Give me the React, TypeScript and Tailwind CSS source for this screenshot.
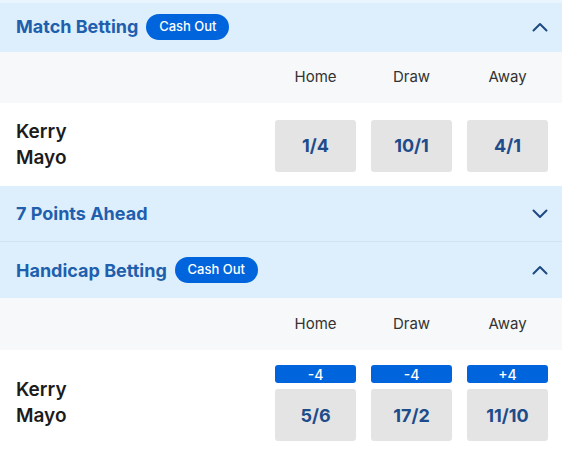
import React from 'react';

const ChevronUp = () => (
  <svg width="16" height="10" viewBox="0 0 16 10" fill="none" className="text-[#1d4a82]">
    <path d="M1.5 8.5L8 2L14.5 8.5" stroke="currentColor" strokeWidth="2" strokeLinecap="round" strokeLinejoin="round" />
  </svg>
);

const ChevronDown = () => (
  <svg width="16" height="10" viewBox="0 0 16 10" fill="none" className="text-[#1d4a82]">
    <path d="M1.5 1.5L8 8L14.5 1.5" stroke="currentColor" strokeWidth="2" strokeLinecap="round" strokeLinejoin="round" />
  </svg>
);

const CashOut = () => (
  <span className="h-[26px] w-[83px] rounded-full bg-[#0064dc] text-white text-[13px] font-medium flex items-center justify-center">
    Cash Out
  </span>
);

const SectionHeader: React.FC<{ title: string; cashOut?: boolean; open?: boolean; className?: string }> = ({
  title,
  cashOut,
  open,
  className = '',
}) => (
  <div className={`bg-[#ddeffc] flex items-center justify-between pl-4 pr-[14px] ${className}`}>
    <div className="flex items-center gap-2">
      <span className="text-[18px] font-bold text-[#1f5fae]">{title}</span>
      {cashOut && <CashOut />}
    </div>
    {open ? <ChevronUp /> : <ChevronDown />}
  </div>
);

const ColumnHeader: React.FC<{ className?: string }> = ({ className = '' }) => (
  <div className={`bg-[#f6f8fa] flex items-center justify-end pr-[14px] gap-[15px] text-[15px] text-[#333] ${className}`}>
    {['Home', 'Draw', 'Away'].map((c) => (
      <span key={c} className="w-[81px] text-center">{c}</span>
    ))}
  </div>
);

const Teams = () => (
  <div className="text-[19px] font-semibold leading-[26px] text-[#1b1b1b]">
    <div>Kerry</div>
    <div>Mayo</div>
  </div>
);

const Odd: React.FC<{ v: string }> = ({ v }) => (
  <div className="w-[81px] h-[52px] rounded-[3px] bg-[#e4e4e4] flex items-center justify-center text-[18px] font-bold text-[#1e4b8a]">
    {v}
  </div>
);

export default function App() {
  const handicap = [
    { h: '-4', v: '5/6' },
    { h: '-4', v: '17/2' },
    { h: '+4', v: '11/10' },
  ];
  return (
    <div className="w-[562px] h-[450px] overflow-hidden bg-white font-['Inter',sans-serif]">
      <div className="h-[3px] bg-[#e9f5fd]" />
      <SectionHeader title="Match Betting" cashOut open className="h-[49px] pb-[2px]" />
      <ColumnHeader className="h-[51px]" />
      <div className="h-[83px] flex items-center justify-between pl-4 pr-[14px]">
        <Teams />
        <div className="flex gap-[15px] pt-[2px]">
          <Odd v="1/4" />
          <Odd v="10/1" />
          <Odd v="4/1" />
        </div>
      </div>
      <SectionHeader title="7 Points Ahead" className="h-[56px] border-b border-[#cfe3f2]" />
      <SectionHeader title="Handicap Betting" cashOut open className="h-[56px]" />
      <ColumnHeader className="h-[52px]" />
      <div className="flex items-center justify-between pl-4 pr-[14px] pt-[15px] pb-[15px]">
        <Teams />
        <div className="flex gap-[15px]">
          {handicap.map((o, i) => (
            <div key={i} className="flex flex-col gap-[6px]">
              <div className="w-[81px] h-[18px] rounded-[3px] bg-[#0064dc] text-white text-[14px] font-medium flex items-center justify-center">
                {o.h}
              </div>
              <Odd v={o.v} />
            </div>
          ))}
        </div>
      </div>
    </div>
  );
}
